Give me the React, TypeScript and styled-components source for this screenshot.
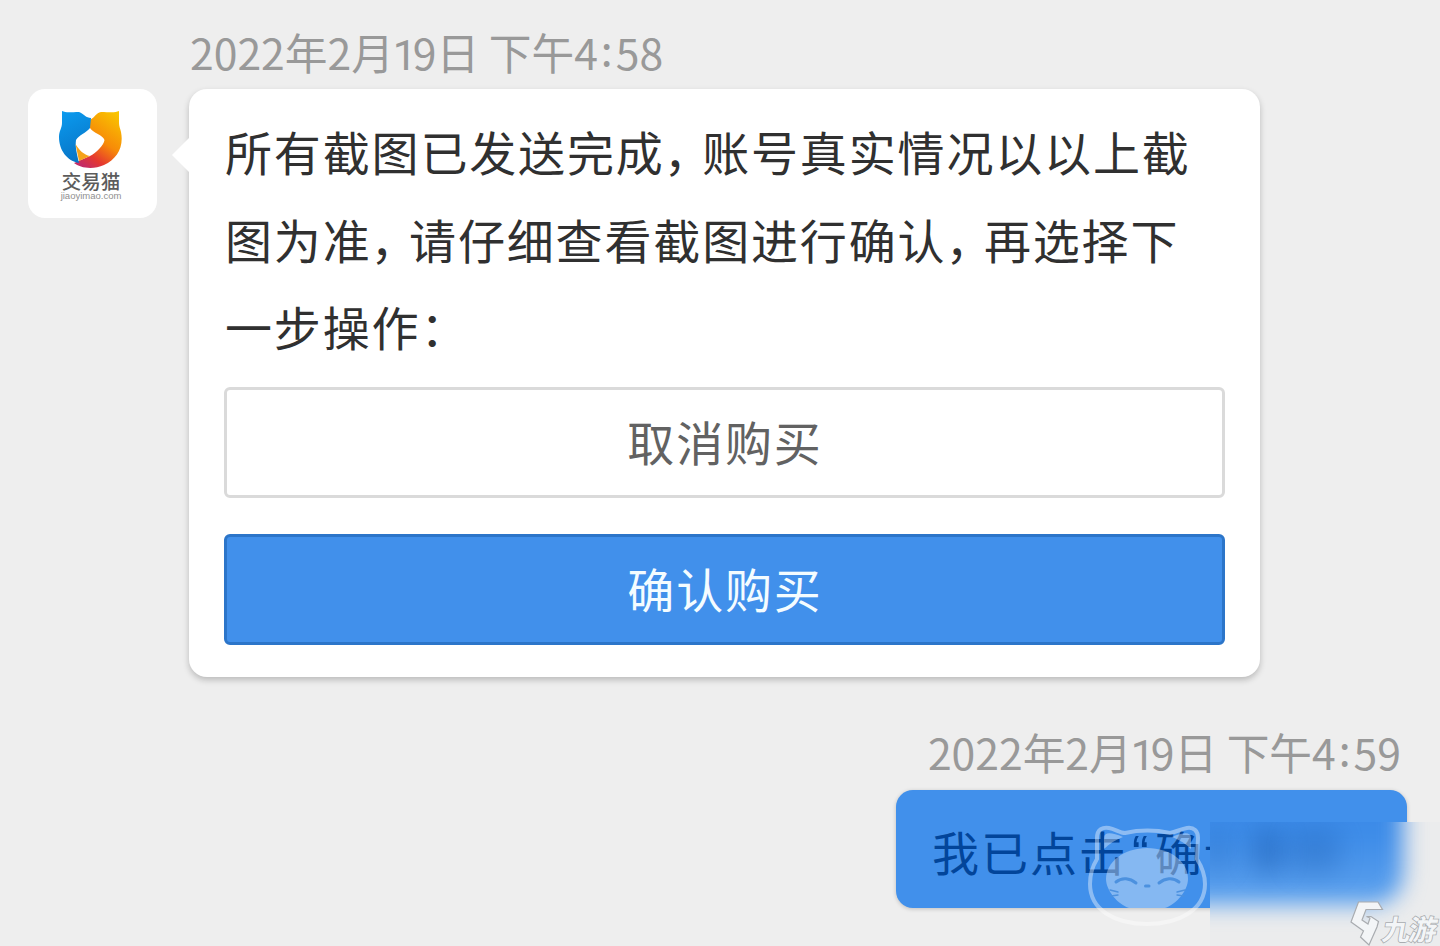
import React from 'react';
import styled, { createGlobalStyle } from 'styled-components';

const colors = {
  page: '#eeeeee',
  surface: '#ffffff',
  text: '#303030',
  muted: '#999999',
  border: '#dadada',
  primary: '#4190eb',
  primaryDark: '#2c75c9',
  sentText: '#02459a',
};

const GlobalStyle = createGlobalStyle`
  * {
    box-sizing: border-box;
  }

  body {
    margin: 0;
    background: ${colors.page};
    font-family: 'Noto Sans CJK SC', sans-serif;
  }
`;

const Chat = styled.main`
  position: relative;
  display: flex;
  flex-direction: column;
  height: 946px;
  padding: 22px 33px 0 28px;
  overflow: hidden;
  background: ${colors.page};
`;

const TimeText = styled.time<{ $sent?: boolean }>`
  align-self: ${({ $sent }) => ($sent ? 'flex-end' : 'flex-start')};
  margin: ${({ $sent }) => ($sent ? '45px 6px 0 0' : '0 0 0 162px')};
  height: ${({ $sent }) => ($sent ? '68px' : '67px')};
  color: ${colors.muted};
  font-size: 42.7px;
  line-height: 58px;
  white-space: nowrap;
`;

const NarrowDigit = styled.span`
  margin-left: -1px;
  font-family: Roboto, sans-serif;
  letter-spacing: -4px;
`;

const Colon = styled.span`
  display: inline-block;
  padding: 0 3px 5px;
  line-height: 48px;
  vertical-align: 4px;
`;

const MessageRow = styled.div<{ $sent?: boolean }>`
  display: flex;
  align-items: flex-start;
  justify-content: ${({ $sent }) => ($sent ? 'flex-end' : 'flex-start')};
  gap: 32px;
`;

const Avatar = styled.div`
  display: flex;
  flex: none;
  flex-direction: column;
  align-items: center;
  width: 129px;
  height: 129px;
  padding: 21px 3px 0 0;
  border-radius: 17px;
  background: ${colors.surface};
`;

const AvatarName = styled.span`
  margin-top: 2px;
  color: #5c5c5c;
  font-size: 19.5px;
  font-weight: 500;
  line-height: 22px;
`;

const AvatarSite = styled.span`
  color: #8f8f8f;
  font-family: 'Liberation Sans', Arial, sans-serif;
  font-size: 9.5px;
  line-height: 8px;
`;

const Bubble = styled.section`
  position: relative;
  width: 1071px;
  height: 588px;
  padding: 18px 35px 0;
  border-radius: 18px;
  background: ${colors.surface};
  box-shadow: 0 3px 6px rgba(0, 0, 0, 0.22);

  &::before {
    content: '';
    position: absolute;
    top: 49px;
    left: -17px;
    border: solid transparent;
    border-width: 17px 17px 17px 0;
    border-right-color: ${colors.surface};
  }
`;

const MessageText = styled.p`
  margin: 0 0 17px 1px;
  color: ${colors.text};
  font-size: 47px;
  letter-spacing: 1.85px;
  line-height: 87.6px;
  white-space: nowrap;
`;

const Comma = styled.span`
  margin-left: -1px;
  letter-spacing: -8.5px;
`;

const Action = styled.button<{ $primary?: boolean }>`
  display: flex;
  align-items: center;
  justify-content: center;
  width: 1001px;
  height: 111px;
  margin-bottom: 36px;
  padding: 0 0 4px 1px;
  border: 3px solid ${({ $primary }) => ($primary ? colors.primaryDark : colors.border)};
  border-radius: 6px;
  background: ${({ $primary }) => ($primary ? colors.primary : colors.surface)};
  color: ${({ $primary }) => ($primary ? '#f4fcff' : '#626262')};
  font-family: inherit;
  font-size: 47px;
  letter-spacing: 1.85px;
`;

const SentBubble = styled.section`
  width: 511px;
  height: 118px;
  padding: 0 0 0 36px;
  border-radius: 17px;
  background: ${colors.primary};
  box-shadow: 0 1px 4px rgba(0, 0, 0, 0.2);
  color: ${colors.sentText};
  font-size: 47px;
  letter-spacing: 1.95px;
  line-height: 122px;
  white-space: nowrap;
`;

const Quote = styled.span`
  display: inline-block;
  width: 27px;
  font-family: 'Liberation Sans', Arial, sans-serif;
  font-size: 50px;
  line-height: 60px;
  text-align: center;
`;

const CatMark = styled.svg`
  position: absolute;
  top: 820px;
  left: 1084px;
`;

const BlurPatch = styled.div`
  position: absolute;
  right: 0;
  bottom: 0;
  width: 230px;
  height: 124px;
  overflow: hidden;
  background: #ebeced;
`;

const BlurredBubble = styled.div`
  position: absolute;
  top: -60px;
  left: -60px;
  width: 253px;
  height: 143px;
  border-radius: 0 0 30px 0;
  background: linear-gradient(#3c8be8 50%, #5fa3ee);
  filter: blur(11px);
`;

const Smudge = styled.div<{ $left: number; $width: number; $opacity: number }>`
  position: absolute;
  top: 6px;
  left: ${({ $left }) => $left}px;
  width: ${({ $width }) => $width}px;
  height: 46px;
  border-radius: 10px;
  background: #1858ad;
  opacity: ${({ $opacity }) => $opacity};
  filter: blur(12px);
`;

const Brand = styled.div`
  position: absolute;
  right: 0;
  bottom: 0;
  display: flex;
  align-items: flex-end;
  width: 91px;
  height: 46px;
`;

const BrandName = styled.span`
  margin-left: -1px;
  color: #f3f5f7;
  font-size: 28px;
  font-weight: 700;
  letter-spacing: -1.5px;
  line-height: 36px;
  white-space: nowrap;
  transform: skewX(-10deg);
  -webkit-text-stroke: 1.6px #a9acb0;
  paint-order: stroke fill;
`;

type StampProps = {
  minute: string;
  sent?: boolean;
};

const Timestamp: React.FC<StampProps> = ({ minute, sent }) => (
  <TimeText $sent={sent}>
    2022年2月<NarrowDigit>1</NarrowDigit>9日 下午4<Colon>:</Colon>
    {minute}
  </TimeText>
);

const CatLogo: React.FC = () => (
  <svg width="64" height="58" viewBox="0 0 64 58">
    <defs>
      <linearGradient id="catBlue" x1="0" y1="0" x2="0.3" y2="1">
        <stop offset="0" stopColor="#0b9cf0" />
        <stop offset="1" stopColor="#0876c8" />
      </linearGradient>
      <linearGradient id="catWarm" x1="0.85" y1="0" x2="0.25" y2="1">
        <stop offset="0" stopColor="#f9c500" />
        <stop offset="0.5" stopColor="#f78b08" />
        <stop offset="0.8" stopColor="#e5382f" />
        <stop offset="1" stopColor="#c42c66" />
      </linearGradient>
    </defs>
    <path
      d="M60 1C56 3 50 2 42 2C37 3 36 7 31 10V18C34 23 44 25 45.5 30C45 35 37 43 31 46L15 53C21 58 34 60 45 55C58 49 65 37 62 22C61 18 60 16 60 13Z"
      fill="url(#catWarm)"
    />
    <path
      d="M3 1C7 3 12 2 20 2C25 4 27 8 32 8L31 18C27 23 20 25 17 30C16 37 18 44 20 53C8 51 0 40 0 27C0 21 3 18 3 13Z"
      fill="url(#catBlue)"
    />
    <path d="M16.5 34C20 40 25 45 31 46L20 51Z" fill="#f5a21a" />
  </svg>
);

const App: React.FC = () => (
  <>
    <GlobalStyle />
    <Chat>
      <Timestamp minute="58" />
      <MessageRow>
        <Avatar>
          <CatLogo />
          <AvatarName>交易猫</AvatarName>
          <AvatarSite>jiaoyimao.com</AvatarSite>
        </Avatar>
        <Bubble>
          <MessageText>
            所有截图已发送完成<Comma>，</Comma>账号真实情况以以上截
            <br />
            图为准<Comma>，</Comma>请仔细查看截图进行确认<Comma>，</Comma>再选择下
            <br />
            一步操作：
          </MessageText>
          <Action>取消购买</Action>
          <Action $primary>确认购买</Action>
        </Bubble>
      </MessageRow>

      <Timestamp minute="59" sent />
      <MessageRow $sent>
        <SentBubble>
          我已点击<Quote>“</Quote>确认购买<Quote>”</Quote>
        </SentBubble>
      </MessageRow>

      <CatMark width="126" height="108" viewBox="0 0 126 108" fill="none">
        <path
          d="M13 39V18C13 9 19 7 25 8C31 9 36 13 41 13C55 10 72 10 86 13C92 12 97 9 103 8C110 7 114 11 114 18L113 39C118 47 121 55 121 64C121 90 95 104 63 104C31 104 6 90 6 64C6 55 8 47 13 39Z"
          stroke="#fff"
          strokeOpacity="0.4"
          strokeWidth="4"
        />
        <path
          d="M20 29V18C20 12 27 12 39 17C31 20 25 24 20 29ZM107 29V18C107 12 100 12 88 17C96 20 102 24 107 29Z"
          fill="#fff"
          fillOpacity="0.36"
        />
        <path
          d="M63 28C87 28 104 42 104 59C104 70 93 84 81 88H45C33 84 22 70 22 59C22 42 40 28 63 28Z"
          fill="#fff"
          fillOpacity="0.36"
        />
        <g stroke="#4c91df" strokeLinecap="round">
          <path d="M32 62C38 57 46 58 52 63M75 63C81 58 89 57 95 62" strokeWidth="3" />
          <path d="M61.5 66H65" strokeWidth="3" />
          <path d="M26 70L34 72M27 76L34 75M93 72L101 70M93 75L100 76" strokeWidth="1.3" />
        </g>
      </CatMark>

      <BlurPatch>
        <BlurredBubble />
        <Smudge $left={-4} $width={24} $opacity={0.22} />
        <Smudge $left={42} $width={32} $opacity={0.42} />
        <Smudge $left={80} $width={50} $opacity={0.27} />
      </BlurPatch>
      <Brand>
        <svg width="35" height="46" viewBox="0 0 35 46">
          <path
            d="M9.5 2H29L33.5 9.5H17L13 20L19 24L21 18L17.5 16.5H22L29.5 21.5L28 27L20 45L11.5 37L14.5 31L2 22Z"
            fill="#f3f5f7"
            stroke="#a9acb0"
            strokeWidth="1.2"
          />
        </svg>
        <BrandName>九游</BrandName>
      </Brand>
    </Chat>
  </>
);

export default App;
